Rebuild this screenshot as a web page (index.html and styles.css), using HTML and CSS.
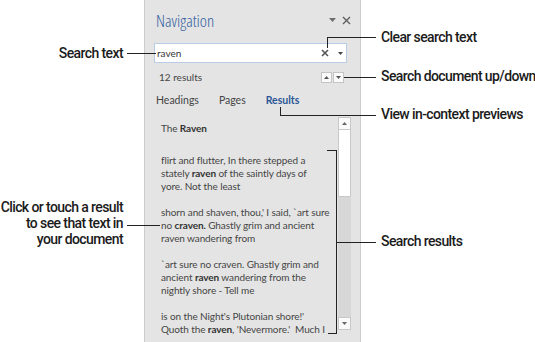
FILE: index.html
```html
<!DOCTYPE html>
<html lang="en">
<head>
  <meta charset="UTF-8">
  <meta name="viewport" content="width=device-width, initial-scale=1.0">
  <title>Navigation pane</title>
  <link rel="stylesheet" href="styles.css">
</head>
<body>
  <div class="stage">

    <!-- Navigation pane -->
    <aside class="panel">
      <div class="nav-head">
        <h1 class="nav-title">Navigation</h1>
        <div class="head-tools">
          <svg class="icon-caret" width="7" height="4" viewBox="0 0 7 4"><path d="M0 0h7L3.5 4z" fill="#6d6d6d"/></svg>
          <svg class="icon-close" width="9" height="9" viewBox="0 0 9 9"><path d="M1 1l7 7M8 1l-7 7" stroke="#5f5f5f" stroke-width="1.4"/></svg>
        </div>
      </div>

      <div class="search-box">
        <span class="search-text">raven</span>
        <svg class="search-clear" width="8" height="8" viewBox="0 0 8 8"><path d="M1 1l6 6M7 1l-6 6" stroke="#555" stroke-width="1.6"/></svg>
        <svg class="search-caret" width="5" height="3" viewBox="0 0 5 3"><path d="M0 0h5L2.5 3z" fill="#444"/></svg>
      </div>

      <div class="count-row">
        <span>12 results</span>
        <div class="step-btns">
          <span class="step-btn"><svg width="5" height="3" viewBox="0 0 5 3"><path d="M0 3h5L2.5 0z" fill="#555"/></svg></span>
          <span class="step-btn"><svg width="5" height="3" viewBox="0 0 5 3"><path d="M0 0h5L2.5 3z" fill="#555"/></svg></span>
        </div>
      </div>

      <nav class="tabs">
        <span>Headings</span>
        <span>Pages</span>
        <span class="tab-active">Results</span>
      </nav>

      <div class="results">
        <div class="result-list">
          <p class="result-heading">The <b>Raven</b></p>
          <p>flirt and flutter, In there stepped a<br>stately <b>raven</b> of the saintly days of<br>yore. Not the least</p>
          <p>shorn and shaven, thou,' I said, `art sure<br>no <b>craven.</b> Ghastly grim and ancient<br>raven wandering from</p>
          <p>`art sure no craven. Ghastly grim and<br>ancient <b>raven</b> wandering from the<br>nightly shore - Tell me</p>
          <p>is on the Night's Plutonian shore!'<br>Quoth the <b>raven</b>, 'Nevermore.'&nbsp; Much I</p>
        </div>
        <div class="scrollbar">
          <span class="scroll-btn"><svg width="5" height="3" viewBox="0 0 5 3"><path d="M0 3h5L2.5 0z" fill="#666"/></svg></span>
          <span class="scroll-thumb"></span>
          <span class="scroll-track"></span>
          <span class="scroll-btn"><svg width="5" height="3" viewBox="0 0 5 3"><path d="M0 0h5L2.5 3z" fill="#666"/></svg></span>
        </div>
      </div>
    </aside>

    <!-- Callouts -->
    <div class="callout label-left" style="top:45px">Search text</div>
    <div class="line h" style="left:127px; top:53px; width:29px"></div>

    <div class="line v" style="left:327px; top:37px; height:11px"></div>
    <div class="line h" style="left:327px; top:37px; width:49px"></div>
    <div class="callout label-right" style="top:29px">Clear search text</div>

    <div class="line h" style="left:344px; top:77px; width:32px"></div>
    <div class="callout label-right" style="top:68px">Search document up/down</div>

    <div class="line v" style="left:280px; top:107px; height:9px"></div>
    <div class="line h" style="left:280px; top:115px; width:96px"></div>
    <div class="callout label-right" style="top:106px">View in-context previews</div>

    <div class="callout label-left multi" style="top:199px">Click or touch a result<br>to see that text in<br>your document</div>
    <div class="line h" style="left:127px; top:225px; width:33px"></div>

    <div class="line v" style="left:336px; top:150px; height:184px"></div>
    <div class="line h" style="left:327px; top:150px; width:10px"></div>
    <div class="line h" style="left:328px; top:333px; width:9px"></div>
    <div class="line h" style="left:336px; top:242px; width:40px"></div>
    <div class="callout label-right" style="top:233px">Search results</div>

  </div>
</body>
</html>
```

FILE: styles.css
```css
body {
  margin: 0;
  background: #fff;
  font-family: Lato, "Open Sans", sans-serif;
  overflow: hidden;
}

.stage {
  position: relative;
  width: 535px;
  height: 342px;
}

/* pane */
.panel {
  box-sizing: border-box;
  margin-left: 144px;
  width: 217px;
  height: 342px;
  background: #e4e4e4;
  border-left: 1px solid #cdcdcd;
  border-right: 1px solid #cdcdcd;
  color: #444;
  font-size: 10px;
}

.nav-head {
  display: flex;
  align-items: center;
  justify-content: space-between;
  height: 40px;
  padding: 0 9px 0 11px;
}

.nav-title {
  margin: 0;
  font-family: "Open Sans", sans-serif;
  font-size: 17px;
  font-weight: 300;
  font-stretch: 80%;
  color: #32619f;
}

.head-tools {
  display: flex;
  align-items: center;
  gap: 6px;
}

.search-box {
  box-sizing: border-box;
  display: flex;
  align-items: center;
  margin: 3px 0 0 9px;
  width: 193px;
  height: 20px;
  padding: 0 3px 0 2px;
  background: #fff;
  border: 1px solid #b9cce6;
  color: #333;
}

.search-text {
  flex: 1;
}

.search-caret {
  margin-left: 9px;
}

.count-row {
  display: flex;
  align-items: center;
  justify-content: space-between;
  margin-top: 7px;
  height: 14px;
  padding: 0 16px 0 14px;
}

.step-btns {
  display: flex;
  gap: 1px;
}

.step-btn {
  box-sizing: border-box;
  display: flex;
  align-items: center;
  justify-content: center;
  width: 11px;
  height: 11px;
  background: #fafafa;
  border: 1px solid #c4c4c4;
}

.tabs {
  display: flex;
  gap: 20px;
  margin-top: 9px;
  height: 14px;
  line-height: 14px;
  padding-left: 11px;
  font-size: 10.5px;
}

.tab-active {
  color: #2b5797;
  font-weight: bold;
}

.results {
  display: flex;
  margin-top: 10px;
}

.result-list {
  width: 193px;
  box-sizing: border-box;
  padding: 5px 0 0 16px;
  white-space: nowrap;
  line-height: 13px;
  letter-spacing: -0.1px;
}

.result-list p {
  margin: 0 0 13px;
}

.result-list .result-heading {
  margin-bottom: 19px;
}

.result-list b {
  color: #333;
}

.scrollbar {
  display: flex;
  flex-direction: column;
  width: 13px;
  height: 213px;
}

.scroll-btn {
  box-sizing: border-box;
  display: flex;
  align-items: center;
  justify-content: center;
  height: 13px;
  background: #fafafa;
  border: 1px solid #c8c8c8;
}

.scroll-thumb {
  box-sizing: border-box;
  height: 67px;
  background: #fff;
  border: 1px solid #c8c8c8;
  border-top: none;
}

.scroll-track {
  flex: 1;
  background: #d7d7d7;
}

/* callouts */
.callout {
  position: absolute;
  font-family: Roboto, "Liberation Sans", sans-serif;
  font-weight: 500;
  font-size: 14px;
  letter-spacing: -0.6px;
  line-height: 16px;
  color: #1b1b1b;
  white-space: nowrap;
}

.label-left {
  right: 412px;
  text-align: right;
}

.label-right {
  left: 381px;
}

.line {
  position: absolute;
  background: #222;
}

.line.h {
  height: 1px;
}

.line.v {
  width: 1px;
}
```
